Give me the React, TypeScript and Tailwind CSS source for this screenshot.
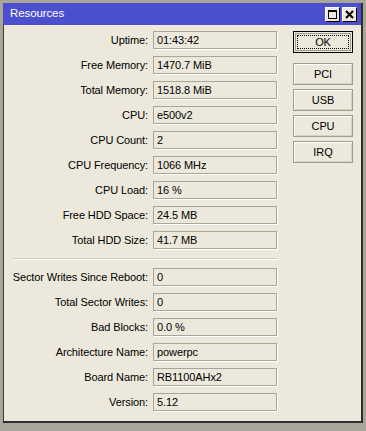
import React from "react";

const top = [
  ["Uptime:", "01:43:42"],
  ["Free Memory:", "1470.7 MiB"],
  ["Total Memory:", "1518.8 MiB"],
  ["CPU:", "e500v2"],
  ["CPU Count:", "2"],
  ["CPU Frequency:", "1066 MHz"],
  ["CPU Load:", "16 %"],
  ["Free HDD Space:", "24.5 MB"],
  ["Total HDD Size:", "41.7 MB"],
];
const bottom = [
  ["Sector Writes Since Reboot:", "0"],
  ["Total Sector Writes:", "0"],
  ["Bad Blocks:", "0.0 %"],
  ["Architecture Name:", "powerpc"],
  ["Board Name:", "RB1100AHx2"],
  ["Version:", "5.12"],
];

function Row({ label, value }: { label: string; value: string }) {
  return (
    <div className="flex items-center h-[18px]">
      <div className="w-[144px] text-right pr-0 leading-none">{label}</div>
      <div className="ml-[5px] w-[124px] h-[18px] border border-[#a9a697] shadow-[1px_1px_0_#ffffff] flex items-center pl-[3px] leading-none">
        {value}
      </div>
    </div>
  );
}

function Btn({ children, def }: { children: React.ReactNode; def?: boolean }) {
  if (def) {
    return (
      <div className="w-[60px] h-[22px] border border-black p-[1px]">
        <div className="w-full h-full border border-[#9f9c8d] p-[1px]">
          <div className="w-full h-full border border-dotted border-black flex items-center justify-center leading-none">
            {children}
          </div>
        </div>
      </div>
    );
  }
  return (
    <div className="w-[60px] h-[22px] border border-[#9f9c8d] shadow-[inset_1px_1px_0_#ffffff,inset_-1px_-1px_0_#d6d2c2] flex items-center justify-center leading-none">
      {children}
    </div>
  );
}

export default function App() {
  return (
    <div
      className="w-[366px] h-[431px] bg-[#a7a699] pt-[3px] pl-[3px] text-[11px] tracking-[-0.1px] text-black"
      style={{ fontFamily: '"Liberation Sans", Arial, sans-serif' }}
    >
      <div className="w-[360px] h-[420px] border-r-2 border-b-2 border-[#2e2e2e] flex flex-col bg-[#ece9dc]">
        <div className="h-[22px] bg-[#4b4fcd] flex items-center pl-[7px] pr-[4px] text-white text-[11.5px]">
          <span className="flex-1 leading-none">Resources</span>
          <div className="flex gap-[2px]">
            <div className="w-[15px] h-[15px] bg-[#ece9dc] border border-t-white border-l-white border-r-black border-b-black flex items-center justify-center">
              <div className="w-[9px] h-[9px] border border-black border-t-2" />
            </div>
            <div className="w-[15px] h-[15px] bg-[#ece9dc] border border-t-white border-l-white border-r-black border-b-black flex items-center justify-center">
              <svg width="9" height="9" viewBox="0 0 9 9">
                <path d="M1 1 L8 8 M8 1 L1 8" stroke="#000" strokeWidth="2" />
              </svg>
            </div>
          </div>
        </div>
        <div className="flex-1 border-l border-[#3a3a3a] flex">
          <div className="flex flex-col pt-[6px]">
            <div className="flex flex-col gap-[7px]">
              {top.map(([l, v]) => (
                <Row key={l} label={l} value={v} />
              ))}
            </div>
            <div className="ml-[9px] w-[264px] h-[2px] border-t border-[#cfcbbb] border-b border-b-white mt-[9px] mb-[8px]" />
            <div className="flex flex-col gap-[7px]">
              {bottom.map(([l, v]) => (
                <Row key={l} label={l} value={v} />
              ))}
            </div>
          </div>
          <div className="flex flex-col pt-[6px] ml-[16px]">
            <Btn def>OK</Btn>
            <div className="flex flex-col gap-[4px] mt-[10px]">
              <Btn>PCI</Btn>
              <Btn>USB</Btn>
              <Btn>CPU</Btn>
              <Btn>IRQ</Btn>
            </div>
          </div>
        </div>
      </div>
    </div>
  );
}
